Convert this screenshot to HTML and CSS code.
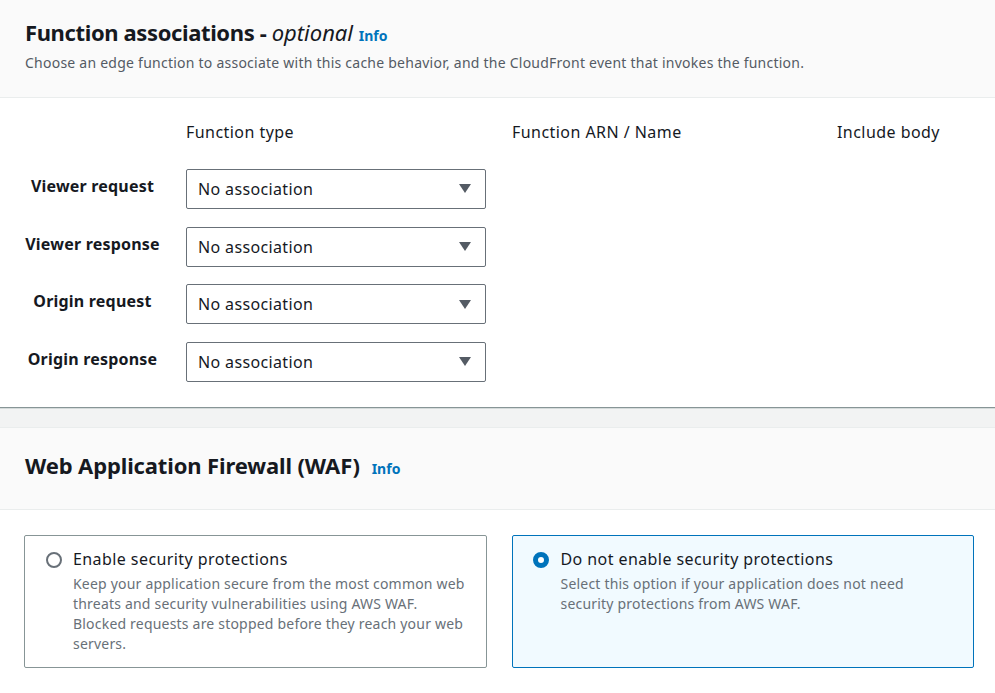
FILE: index.html
```html
<!DOCTYPE html>
<html lang="en">
<head>
<meta charset="utf-8">
<title>Function associations</title>
<link rel="stylesheet" href="styles.css">
</head>
<body>
<section class="panel panel-first">
  <header class="panel-head">
    <h2 class="title"><span class="title-main">Function associations - </span><i class="opt">optional</i> <a class="info">Info</a></h2>
    <p class="desc">Choose an edge function to associate with this cache behavior, and the CloudFront event that invokes the function.</p>
  </header>
  <div class="assoc-grid">
    <div class="colhead"></div>
    <div class="colhead">Function type</div>
    <div class="colhead">Function ARN / Name</div>
    <div class="colhead">Include body</div>

    <div class="rowlabel">Viewer request</div>
    <div class="select">No association<span class="caret"></span></div>
    <div></div><div></div>

    <div class="rowlabel">Viewer response</div>
    <div class="select">No association<span class="caret"></span></div>
    <div></div><div></div>

    <div class="rowlabel">Origin request</div>
    <div class="select">No association<span class="caret"></span></div>
    <div></div><div></div>

    <div class="rowlabel">Origin response</div>
    <div class="select">No association<span class="caret"></span></div>
    <div></div><div></div>
  </div>
</section>
<div class="band"></div>
<section class="panel panel-second">
  <header class="panel-head waf-head">
    <h2 class="title"><span class="title-waf">Web Application Firewall (WAF)</span> <a class="info info-wide">Info</a></h2>
  </header>
  <div class="tiles">
    <div class="tile">
      <span class="radio"></span>
      <div class="tile-text">
        <div class="tile-title">Enable security protections</div>
        <div class="tile-desc">Keep your application secure from the most common web threats and security vulnerabilities using AWS WAF. Blocked requests are stopped before they reach your web servers.</div>
      </div>
    </div>
    <div class="tile tile-selected">
      <span class="radio radio-on"></span>
      <div class="tile-text">
        <div class="tile-title">Do not enable security protections</div>
        <div class="tile-desc">Select this option if your application does not need security protections from AWS WAF.</div>
      </div>
    </div>
  </div>
</section>
</body>
</html>
```
FILE: styles.css
```css
* { box-sizing: border-box; }
html, body {
  margin: 0;
  padding: 0;
  background: #ffffff;
  font-family: "Noto Sans", "Open Sans", Arial, sans-serif;
  color: #16191f;
}
.panel { background: #ffffff; }
.panel-first {
  border-bottom: 1px solid #879596;
}
.panel-head {
  background: #fafafa;
  border-bottom: 1px solid #eaeded;
  padding: 18px 25px 24px 25px;
}
.title {
  margin: 0;
  font-size: 22px;
  line-height: 28px;
  font-weight: 700;
  color: #16191f;
}
.title-main { letter-spacing: -0.38px; }
.title-waf { letter-spacing: -0.13px; }
.opt {
  font-style: italic;
  font-weight: 400;
}
.info {
  font-size: 14px;
  line-height: 14px;
  font-weight: 700;
  color: #0073bb;
  text-decoration: none;
}
.info-wide { margin-left: 6px; }
.desc {
  margin: 7px 0 0 0;
  font-size: 14px;
  line-height: 20px;
  letter-spacing: 0.24px;
  color: #545b64;
}
.assoc-grid {
  display: grid;
  grid-template-columns: 135px 300px 299px 1fr;
  column-gap: 26px;
  row-gap: 17.67px;
  padding: 22px 25px 25px 25px;
  align-items: center;
}
.colhead {
  font-size: 16px;
  line-height: 24px;
  letter-spacing: 0.45px;
  padding-bottom: 7.33px;
  color: #16191f;
  white-space: nowrap;
}
.rowlabel {
  font-size: 16px;
  line-height: 24px;
  font-weight: 700;
  letter-spacing: 0.2px;
  text-align: center;
  padding-bottom: 6px;
  white-space: nowrap;
}
.select {
  height: 40px;
  border: 1px solid #687078;
  border-radius: 2px;
  background: #ffffff;
  display: flex;
  align-items: center;
  justify-content: space-between;
  padding: 0 14px 0 11px;
  font-size: 16px;
  letter-spacing: 0.36px;
  color: #16191f;
}
.caret {
  width: 0;
  height: 0;
  border-left: 6.5px solid transparent;
  border-right: 6.5px solid transparent;
  border-top: 9px solid #545b64;
}
.band {
  height: 19px;
  background: #f2f3f3;
  border-top: 1px solid #d5dbdb;
}
.panel-second {
  border-top: 1px solid #eaeded;
}
.waf-head {
  padding: 23px 25px 30px 25px;
}
.tiles {
  display: grid;
  grid-template-columns: 1fr 1fr;
  column-gap: 25px;
  padding: 25px 21px 0 24px;
}
.tile {
  display: flex;
  align-items: flex-start;
  gap: 11px;
  border: 1px solid #879596;
  border-radius: 2px;
  padding: 11px 20px 13px 21px;
  min-height: 133px;
}
.tile-selected {
  border-color: #0073bb;
  background: #f1faff;
  padding-left: 20px;
  gap: 12px;
}
.radio {
  flex: none;
  width: 16px;
  height: 16px;
  margin-top: 5px;
  border: 2px solid #687078;
  border-radius: 50%;
  background: #ffffff;
}
.radio-on {
  border: 5px solid #0073bb;
  background: #ffffff;
}
.tile-title {
  font-size: 16px;
  line-height: 24px;
  letter-spacing: 0.42px;
  color: #16191f;
}
.tile-desc {
  margin-top: 3px;
  font-size: 14px;
  line-height: 20px;
  letter-spacing: 0.2px;
  color: #687078;
}
```
